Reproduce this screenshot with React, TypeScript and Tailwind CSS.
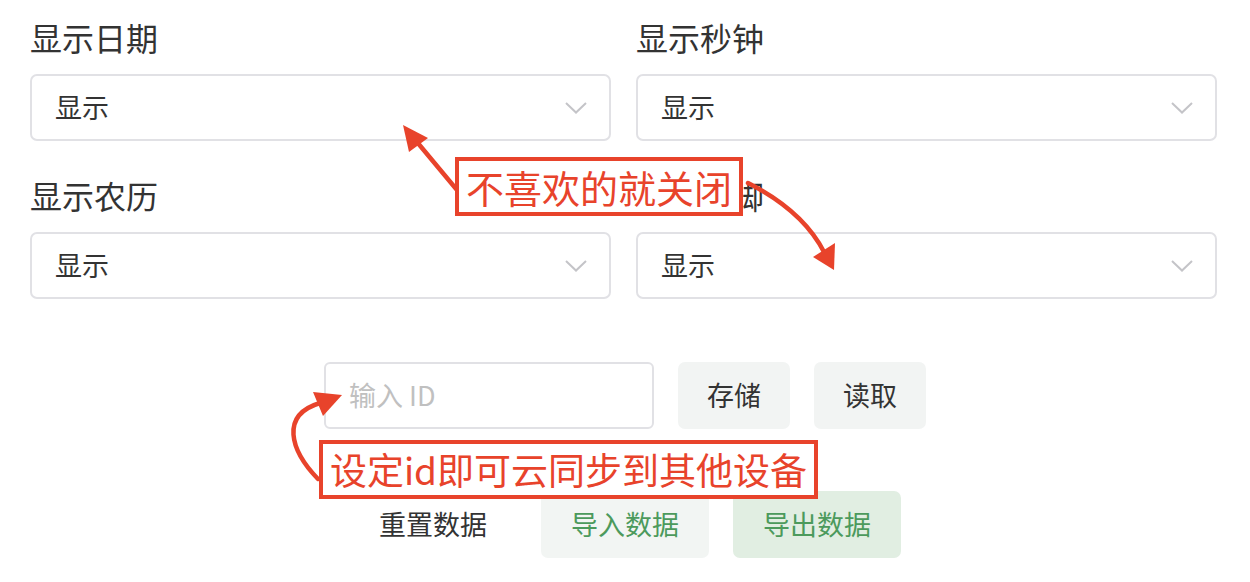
import React from "react";

const Chevron = () => (
  <svg width="22" height="12" viewBox="0 0 22 12" fill="none">
    <path d="M1 1L11 10.5L21 1" stroke="#c4c4c8" strokeWidth="2" />
  </svg>
);

const SelectField = ({ label, value }: { label: string; value: string }) => (
  <div className="flex flex-col">
    <div className="h-[42px] leading-[42px] text-[32px] text-[#333]">{label}</div>
    <div className="mt-[16px] h-[67px] flex items-center justify-between border-2 border-[#e1e1e5] rounded-[7px] pl-[23px] pr-[22px]">
      <span className="text-[27px] text-[#333]">{value}</span>
      <Chevron />
    </div>
  </div>
);

const Callout = ({ text, className }: { text: string; className: string }) => (
  <div
    className={`absolute flex items-center justify-center border-4 border-[#e8432b] bg-white text-[#e8432b] leading-none ${className}`}
  >
    {text}
  </div>
);

export default function App() {
  return (
    <div
      className="relative w-[1250px] h-[582px] overflow-hidden bg-white"
      style={{ fontFamily: '"Noto Sans CJK SC", "Noto Sans", sans-serif' }}
    >
      {/* settings grid */}
      <div className="pt-[16px] pl-[30px] w-[1217px] grid grid-cols-2 gap-x-[25px] gap-y-[33px]">
        <SelectField label="显示日期" value="显示" />
        <SelectField label="显示秒钟" value="显示" />
        <SelectField label="显示农历" value="显示" />
        <SelectField label="显示页脚" value="显示" />
      </div>

      {/* cloud id row */}
      <div className="mt-[63px] flex justify-center gap-[24px]">
        <div className="w-[330px] h-[67px] flex items-center border-2 border-[#e1e1e5] rounded-[6px] pl-[23px] text-[27px] text-[#c0c0c0]">
          输入 ID
        </div>
        <button className="w-[112px] h-[67px] rounded-[7px] bg-[#f2f4f3] text-[27px] text-[#333]">
          存储
        </button>
        <button className="w-[112px] h-[67px] rounded-[7px] bg-[#f2f4f3] text-[27px] text-[#333]">
          读取
        </button>
      </div>

      {/* data row */}
      <div className="mt-[62px] flex justify-center gap-[24px]">
        <button className="w-[168px] h-[67px] rounded-[7px] text-[27px] text-[#333]">
          重置数据
        </button>
        <button className="w-[168px] h-[67px] rounded-[7px] bg-[#f2f5f3] text-[27px] text-[#4c9a5c]">
          导入数据
        </button>
        <button className="w-[168px] h-[67px] rounded-[7px] bg-[#e1eee2] text-[27px] text-[#4c9a5c]">
          导出数据
        </button>
      </div>

      {/* annotation overlay */}
      <svg
        className="absolute left-0 top-0 pointer-events-none"
        width="1250"
        height="582"
        viewBox="0 0 1250 582"
      >
        <g stroke="#e8432b" strokeWidth="4.5" fill="none" strokeLinecap="round">
          <path d="M457 190L417 142" />
          <path d="M748 183Q803 211 824 252" />
          <path d="M318 479C290 450 280 415 320 403" />
        </g>
        <g fill="#e8432b">
          <polygon points="403,125 428,138 409,152" />
          <polygon points="834,270 813,257 835,243" />
          <polygon points="342,395 313,392 323,416" />
        </g>
      </svg>
      <Callout text="不喜欢的就关闭" className="left-[455px] top-[157px] w-[288px] h-[59px] text-[38px]" />
      <Callout text="设定id即可云同步到其他设备" className="left-[319px] top-[440px] w-[499px] h-[59px] text-[37px]" />
    </div>
  );
}
